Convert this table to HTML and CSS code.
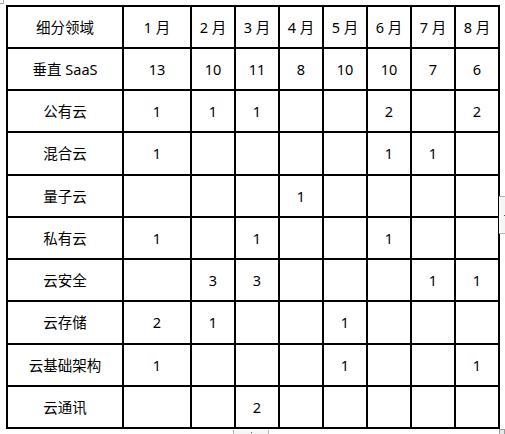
FILE: index.html
```html
<!DOCTYPE html>
<html lang="zh-CN">
<head>
<meta charset="utf-8">
<title>细分领域</title>
<link rel="stylesheet" href="styles.css">
</head>
<body>
<div class="page">
  <span class="corner-mark"></span>
  <table class="grid">
    <colgroup>
      <col class="c-name"><col class="c-first"><col class="c-m"><col class="c-m"><col class="c-m"><col class="c-m"><col class="c-m"><col class="c-m"><col class="c-m">
    </colgroup>
    <tr><td>细分领域</td><td>1 月</td><td>2 月</td><td>3 月</td><td>4 月</td><td>5 月</td><td>6 月</td><td>7 月</td><td>8 月</td></tr>
    <tr><td>垂直 SaaS</td><td>13</td><td>10</td><td>11</td><td>8</td><td>10</td><td>10</td><td>7</td><td>6</td></tr>
    <tr><td>公有云</td><td>1</td><td>1</td><td>1</td><td></td><td></td><td>2</td><td></td><td>2</td></tr>
    <tr class="tall"><td>混合云</td><td>1</td><td></td><td></td><td></td><td></td><td>1</td><td>1</td><td></td></tr>
    <tr><td>量子云</td><td></td><td></td><td></td><td>1</td><td></td><td></td><td></td><td></td></tr>
    <tr><td>私有云</td><td>1</td><td></td><td>1</td><td></td><td></td><td>1</td><td></td><td></td></tr>
    <tr><td>云安全</td><td></td><td>3</td><td>3</td><td></td><td></td><td></td><td>1</td><td>1</td></tr>
    <tr class="tall"><td>云存储</td><td>2</td><td>1</td><td></td><td></td><td>1</td><td></td><td></td><td></td></tr>
    <tr><td>云基础架构</td><td>1</td><td></td><td></td><td></td><td>1</td><td></td><td></td><td>1</td></tr>
    <tr><td>云通讯</td><td></td><td></td><td>2</td><td></td><td></td><td></td><td></td><td></td></tr>
  </table>
  <span class="side-handle"><i class="dot"></i></span>
  <span class="bottom-handle"><i class="dot"></i></span>
  <span class="resize-handle"></span>
</div>
</body>
</html>
```

FILE: styles.css
```css
html, body {
  margin: 0;
  padding: 0;
  background: #ffffff;
}

.page {
  position: relative;
  width: 505px;
  height: 434px;
  overflow: hidden;
  padding: 5px 0 0 6px;
  box-sizing: border-box;
  font-family: "Noto Sans", "Noto Sans CJK SC", sans-serif;
  font-size: 14.5px;
  color: #000;
}

.grid {
  border-collapse: separate;
  border-spacing: 0;
  table-layout: fixed;
  border-left: 2px solid #000;
  border-top: 2px solid #000;
  width: 494px;
}

.c-name { width: 116px; }
.c-first { width: 68px; }
.c-m { width: 44px; }

.grid td {
  height: 40px;
  padding: 0;
  border-right: 2px solid #000;
  border-bottom: 2px solid #000;
  text-align: center;
  vertical-align: middle;
  line-height: 1;
  white-space: nowrap;
}

.grid tr.tall td {
  height: 41px;
}

.corner-mark {
  position: absolute;
  left: 0;
  top: 0;
  width: 3px;
  height: 3px;
  border-right: 1px solid #a6a6a6;
  border-bottom: 1px solid #a6a6a6;
}

.side-handle {
  position: absolute;
  left: 499px;
  top: 196px;
  width: 8px;
  height: 36px;
  background: #f6f6f6;
  border-top: 1px solid #b4b4b4;
  border-bottom: 1px solid #b4b4b4;
}

.side-handle .dot {
  position: absolute;
  left: 5px;
  top: 18px;
  width: 1px;
  height: 1px;
  background: #555;
}

.bottom-handle {
  position: absolute;
  left: 233px;
  top: 430px;
  width: 34px;
  height: 8px;
  background: #f6f6f6;
  border-left: 1px solid #b4b4b4;
  border-right: 1px solid #b4b4b4;
}

.bottom-handle .dot {
  position: absolute;
  left: 17px;
  top: 2px;
  width: 1px;
  height: 1px;
  background: #555;
}

.resize-handle {
  position: absolute;
  left: 499px;
  top: 429px;
  width: 6px;
  height: 6px;
  box-sizing: border-box;
  border: 1px solid #9a9a9a;
  background: #e8e8e8;
}
```
